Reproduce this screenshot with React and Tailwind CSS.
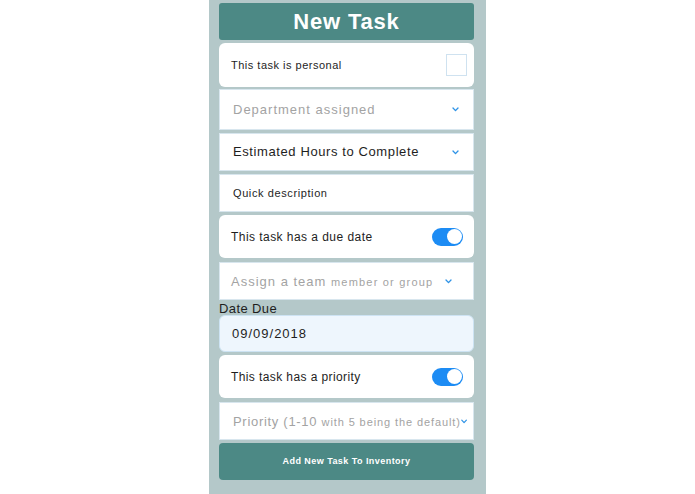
import { useState } from "react";

const Chevron = ({ className = "" }) => (
  <svg viewBox="0 0 8 6" className={"w-[7px] h-[5px] " + className}>
    <polyline
      points="1,1.2 4,4.4 7,1.2"
      fill="none"
      stroke="#2f93e6"
      strokeWidth="1.6"
      strokeLinecap="round"
      strokeLinejoin="round"
    />
  </svg>
);

const Toggle = ({ on, onClick }) => (
  <button
    onClick={onClick}
    className={
      "w-[31px] h-[18px] rounded-full flex items-center p-[1.5px] " +
      (on ? "bg-[#1d8cf4] justify-end" : "bg-[#d5dde2] justify-start")
    }
  >
    <span className="block w-[15px] h-[15px] rounded-full bg-white" />
  </button>
);

export default function App() {
  const [personal, setPersonal] = useState(false);
  const [dueDate, setDueDate] = useState(true);
  const [priority, setPriority] = useState(true);

  return (
    <div
      className="w-full h-[494px] bg-white overflow-hidden"
      style={{ fontFamily: '"Liberation Sans", Arial, sans-serif' }}
    >
      <div className="w-[277px] h-full mx-auto bg-[#b4c8c9] pl-[10px] pr-[12px] pt-[3px] flex flex-col">
        {/* title */}
        <div className="h-[37px] rounded-[3px] bg-[#4c8985] flex items-center justify-center">
          <h1 className="text-white text-[22px] font-bold tracking-[0.8px]">New Task</h1>
        </div>

        {/* personal checkbox */}
        <div className="mt-[3px] h-[44px] rounded-[6px] bg-white flex items-center justify-between pl-[12px] pr-[7px]">
          <span className="text-[11px] tracking-[0.5px] text-[#1e1e1e]">This task is personal</span>
          <button
            onClick={() => setPersonal(!personal)}
            className="w-[21px] h-[22px] border border-[#cfe2f0] bg-white flex items-center justify-center text-[12px] text-[#2f93e6]"
          >
            {personal ? "✓" : ""}
          </button>
        </div>

        <div className="mt-[2px] h-[41px] bg-white border border-[#d8e6ee] flex items-center justify-between pl-[13px] pr-[14px]">
          <span className="text-[13px] tracking-[1px] text-[#a3a3a3]">Department assigned</span>
          <Chevron />
        </div>

        <div className="mt-[3px] h-[38px] bg-white border border-[#d8e6ee] flex items-center justify-between pl-[13px] pr-[14px]">
          <span className="text-[13px] tracking-[0.6px] text-[#1e1e1e]">Estimated Hours to Complete</span>
          <Chevron />
        </div>

        <div className="mt-[3px] h-[38px] bg-white border border-[#d8e6ee] flex items-center pl-[13px]">
          <span className="text-[11px] tracking-[0.6px] text-[#1e1e1e]">Quick description</span>
        </div>

        <div className="mt-[3px] h-[43px] rounded-[6px] bg-white flex items-center justify-between pl-[12px] pr-[11px]">
          <span className="text-[12px] tracking-[0.45px] text-[#1e1e1e]">This task has a due date</span>
          <Toggle on={dueDate} onClick={() => setDueDate(!dueDate)} />
        </div>

        <div className="mt-[4px] h-[38px] bg-white border border-[#d8e6ee] flex items-center justify-between pl-[11px] pr-[21px]">
          <span className="text-[#a3a3a3] whitespace-nowrap">
            <span className="text-[13px] tracking-[1px]">Assign a team </span>
            <span className="text-[11px] tracking-[1.2px]">member or group</span>
          </span>
          <Chevron />
        </div>

        <label className="h-[15px] flex items-end text-[13px] leading-none tracking-[0.4px] text-[#1e1e1e]">
          Date Due
        </label>
        <div className="h-[37px] rounded-[6px] bg-[#eef6fd] border border-[#cde3f3] flex items-center pl-[12px]">
          <span className="text-[13px] tracking-[1px] text-[#1e1e1e]">09/09/2018</span>
        </div>

        <div className="mt-[3px] h-[43px] rounded-[6px] bg-white flex items-center justify-between pl-[12px] pr-[11px]">
          <span className="text-[12px] tracking-[0.4px] text-[#1e1e1e]">This task has a priority</span>
          <Toggle on={priority} onClick={() => setPriority(!priority)} />
        </div>

        <div className="mt-[4px] h-[38px] bg-white border border-[#d8e6ee] flex items-center justify-between pl-[13px] pr-[6px]">
          <span className="text-[#a3a3a3] whitespace-nowrap">
            <span className="text-[13px] tracking-[0.7px]">Priority (1-10 </span>
            <span className="text-[11px] tracking-[0.9px]">with 5 being the default)</span>
          </span>
          <Chevron />
        </div>

        <button className="mt-[3px] h-[37px] rounded-[4px] bg-[#4c8985] flex items-center justify-center">
          <span className="text-white text-[9px] font-bold tracking-[0.45px]">Add New Task To Inventory</span>
        </button>
      </div>
    </div>
  );
}
